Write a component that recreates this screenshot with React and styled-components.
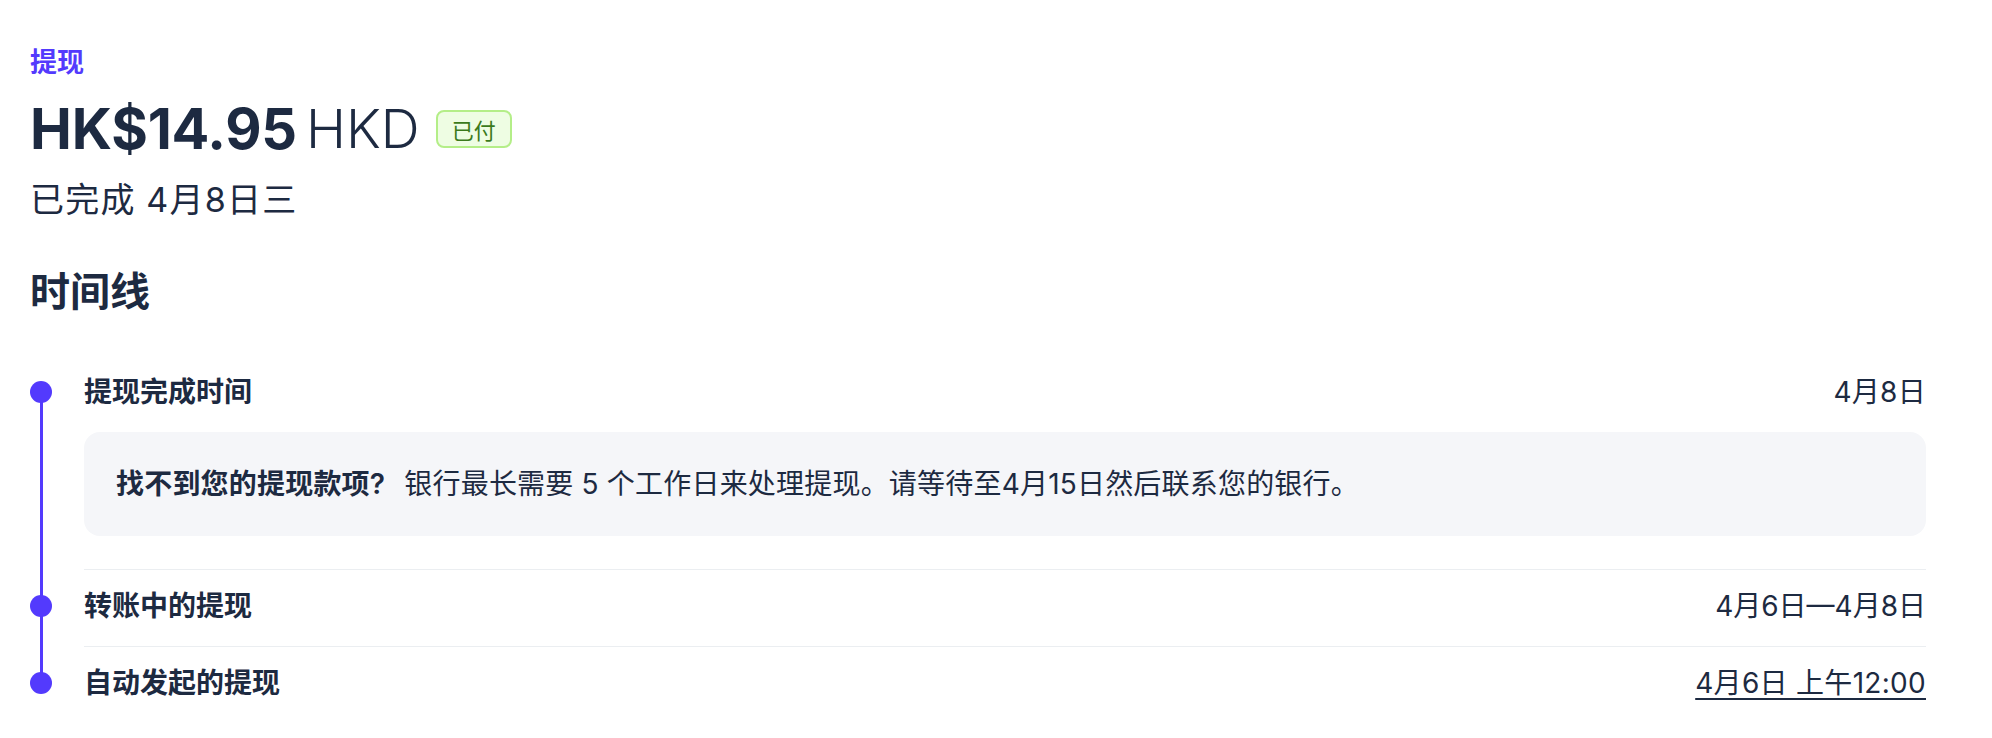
import React from "react";
import styled, { createGlobalStyle } from "styled-components";

const GlobalStyle = createGlobalStyle`
  html, body { margin: 0; padding: 0; background: #ffffff; }
  body {
    font-family: Inter, "Noto Sans CJK SC", "Noto Sans", sans-serif;
    color: #1d2a41;
    -webkit-font-smoothing: antialiased;
  }
`;

const ACCENT = "#533afd";

const Page = styled.main`
  padding: 45px 66px 0 30px;
`;

const Eyebrow = styled.div`
  font-size: 27px;
  line-height: 36px;
  font-weight: 600;
  color: ${ACCENT};
`;

const AmountRow = styled.div`
  display: flex;
  align-items: center;
  margin-top: 16px;
  height: 64px;
`;

const Amount = styled.span`
  font-size: 56px;
  line-height: 64px;
  font-weight: 700;
  letter-spacing: -0.2px;
`;

const Currency = styled.span`
  font-size: 54px;
  line-height: 64px;
  font-weight: 300;
  margin-left: 9px;
`;

const Badge = styled.span`
  margin-left: 16px;
  display: inline-flex;
  align-items: center;
  box-sizing: border-box;
  height: 38px;
  padding: 0 14px;
  font-size: 22px;
  color: #3b7a1c;
  background: #eefde3;
  border: 2px solid #b4ee88;
  border-radius: 8px;
`;

const Subtitle = styled.div`
  margin-top: 17px;
  font-size: 34px;
  line-height: 44px;
  letter-spacing: 1.2px;
`;

const SectionTitle = styled.h2`
  margin: 44px 0 0;
  font-size: 40px;
  line-height: 52px;
  font-weight: 700;
`;

const Timeline = styled.ol`
  list-style: none;
  margin: 38px 0 0;
  padding: 0;
`;

const Item = styled.li`
  display: grid;
  grid-template-columns: 22px 1fr;
  column-gap: 32px;
`;

const Rail = styled.div`
  position: relative;

  &::before {
    content: "";
    position: absolute;
    left: 50%;
    width: 3px;
    margin-left: -1.5px;
    background: ${ACCENT};
    top: ${(p) => (p.$first ? "36px" : "0")};
    bottom: ${(p) => (p.$last ? "calc(100% - 36px)" : "0")};
  }

  &::after {
    content: "";
    position: absolute;
    top: 25px;
    left: 0;
    width: 22px;
    height: 22px;
    border-radius: 50%;
    background: ${ACCENT};
  }
`;

const Content = styled.div`
  padding: 16px 0 20px;
  border-bottom: ${(p) => (p.$last ? "none" : "1px solid #ebeef1")};
`;

const Header = styled.div`
  display: flex;
  justify-content: space-between;
  align-items: center;
  font-size: 28px;
  line-height: 40px;
`;

const Title = styled.span`
  font-weight: 600;
`;

const When = styled.span`
  font-weight: 400;
  letter-spacing: ${(p) => (p.$tight ? "0" : "0.3px")};
  text-decoration: ${(p) => (p.$underline ? "underline" : "none")};
  text-decoration-thickness: 2px;
  text-underline-offset: 5px;
`;

const Callout = styled.div`
  margin: 20px 0 13px;
  padding: 32px;
  background: #f5f6f9;
  border-radius: 16px;
  font-size: 28px;
  line-height: 40px;
  letter-spacing: 0.2px;
`;

const Strong = styled.strong`
  font-weight: 600;
  margin-right: 11px;
`;

const events = [
  {
    title: "提现完成时间",
    when: "4月8日",
    note: {
      lead: "找不到您的提现款项?",
      body: "银行最长需要 5 个工作日来处理提现。请等待至4月15日然后联系您的银行。",
    },
  },
  { title: "转账中的提现", when: "4月6日—4月8日", tight: true },
  { title: "自动发起的提现", when: "4月6日 上午12:00", underline: true },
];

export default function App() {
  return (
    <>
      <GlobalStyle />
      <Page>
        <Eyebrow>提现</Eyebrow>
        <AmountRow>
          <Amount>HK$14.95</Amount>
          <Currency>HKD</Currency>
          <Badge>已付</Badge>
        </AmountRow>
        <Subtitle>已完成 4月8日三</Subtitle>
        <SectionTitle>时间线</SectionTitle>
        <Timeline>
          {events.map((e, i) => {
            const first = i === 0;
            const last = i === events.length - 1;
            return (
              <Item key={e.title}>
                <Rail $first={first} $last={last} />
                <Content $last={last}>
                  <Header>
                    <Title>{e.title}</Title>
                    <When $underline={e.underline} $tight={e.tight}>
                      {e.when}
                    </When>
                  </Header>
                  {e.note && (
                    <Callout>
                      <Strong>{e.note.lead}</Strong> {e.note.body}
                    </Callout>
                  )}
                </Content>
              </Item>
            );
          })}
        </Timeline>
      </Page>
    </>
  );
}
